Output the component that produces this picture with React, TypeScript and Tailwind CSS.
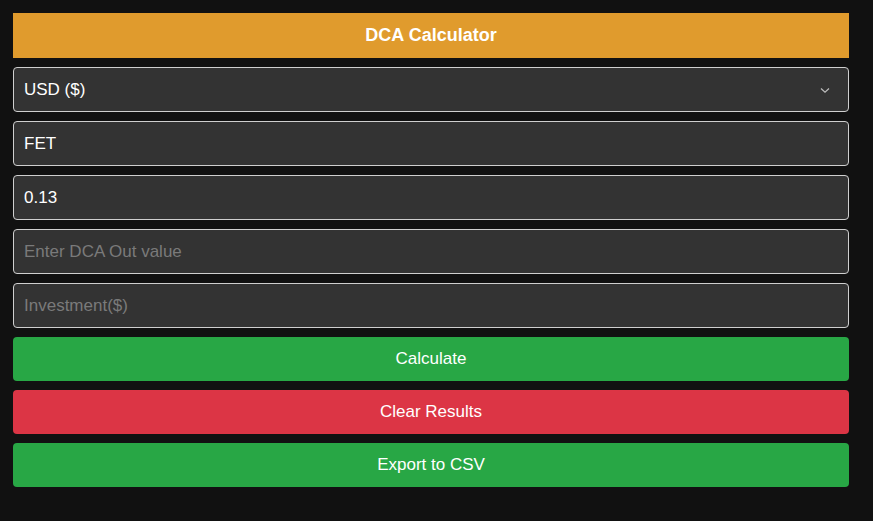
import React from "react";

export default function App() {
  const field =
    "h-[45px] w-full rounded-[4px] border border-[#cfcfcf] bg-[#333333] px-[10px] text-[17px] text-white placeholder:text-[#7a7a7a] outline-none";
  const btn = "h-[44px] w-full rounded-[4px] text-[17px] text-white";
  return (
    <div
      className="min-h-[521px] w-full bg-[#111111] pl-[13px] pr-[24px] pt-[13px]"
      style={{ fontFamily: '"Liberation Sans", Arial, sans-serif' }}
    >
      <div className="flex w-[836px] flex-col">
        <div className="flex h-[45px] items-center justify-center bg-[#e09b2d] text-[18px] font-bold text-white">
          DCA Calculator
        </div>
        <div className="mt-[9px] flex flex-col gap-[9px]">
          <div className={field + " relative flex items-center"}>
            <span>USD ($)</span>
            <svg
              className="absolute right-[18px] top-[19px]"
              width="10"
              height="7"
              viewBox="0 0 10 7"
              fill="none"
            >
              <path d="M1 1.5 L5 5.2 L9 1.5" stroke="#bdbdbd" strokeWidth="1.2" />
            </svg>
          </div>
          <input className={field} defaultValue="FET" />
          <input className={field} defaultValue="0.13" />
          <input className={field} placeholder="Enter DCA Out value" />
          <input className={field} placeholder="Investment($)" />
        </div>
        <div className="mt-[9px] flex flex-col gap-[9px]">
          <button className={btn + " bg-[#28a745]"}>Calculate</button>
          <button className={btn + " bg-[#dc3545]"}>Clear Results</button>
          <button className={btn + " bg-[#28a745]"}>Export to CSV</button>
        </div>
      </div>
    </div>
  );
}
